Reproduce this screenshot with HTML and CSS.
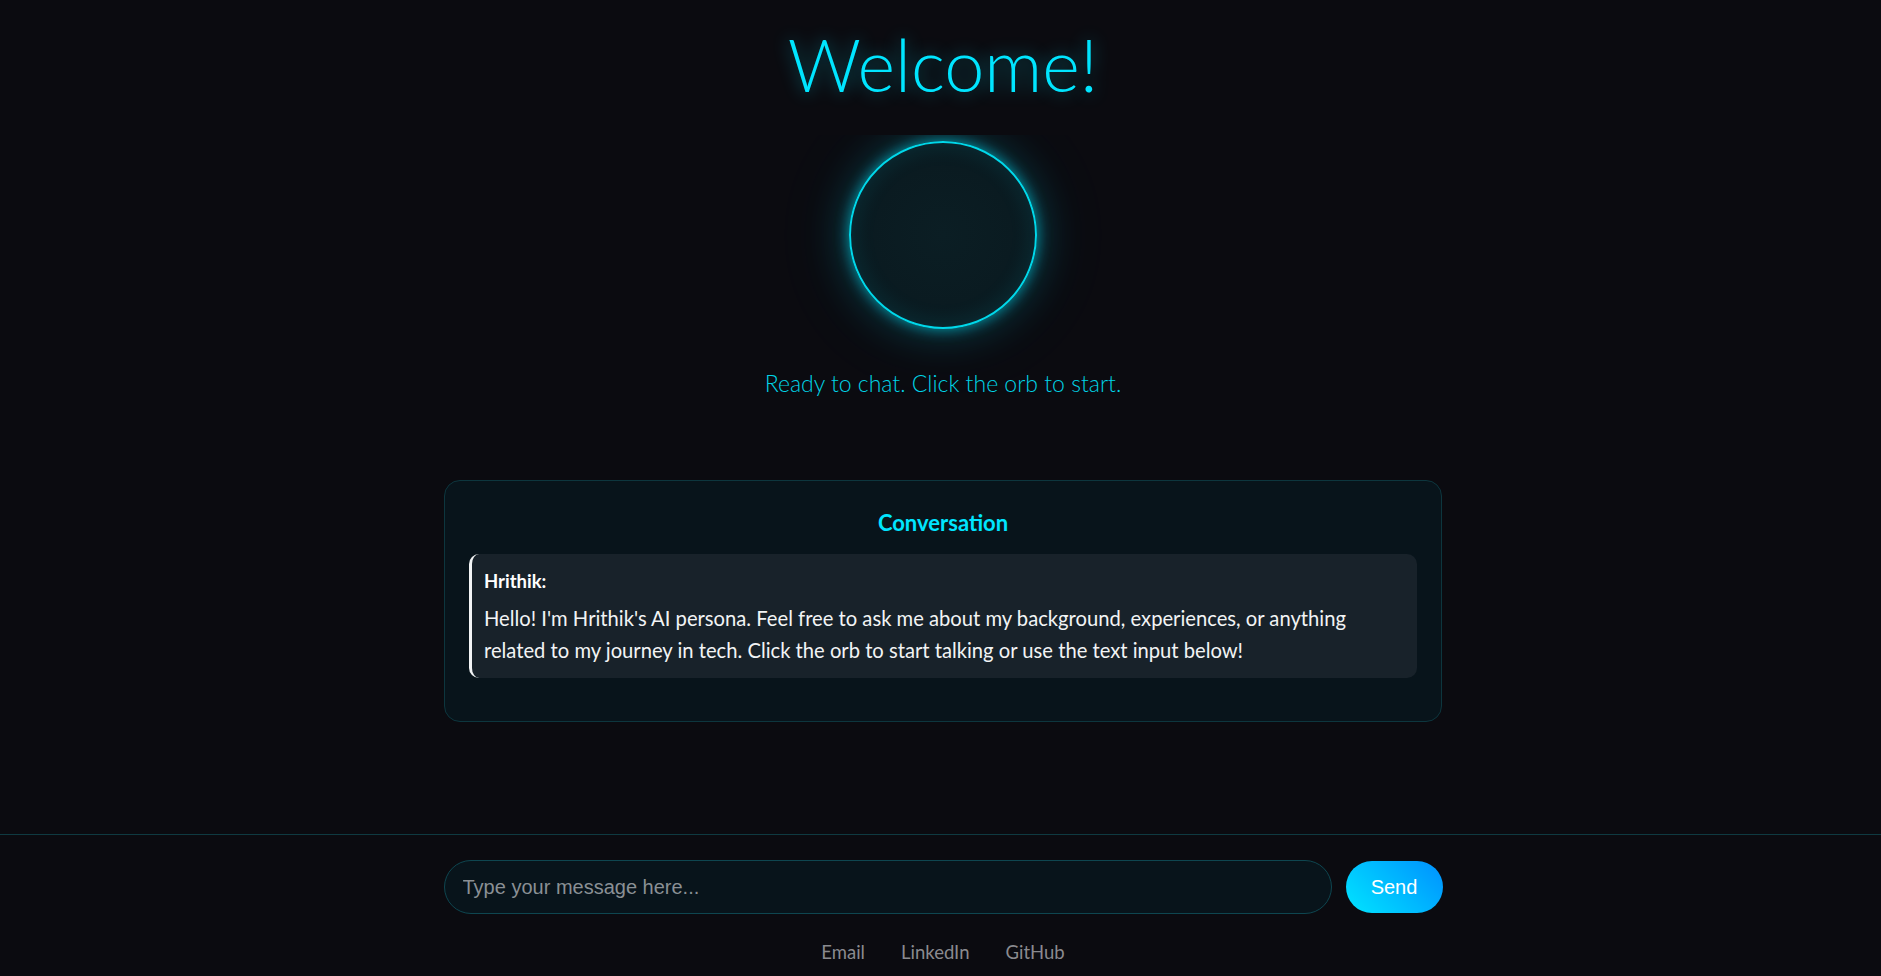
FILE: index.html
```html
<!DOCTYPE html>
<html lang="en">
<head>
<meta charset="utf-8">
<title>Hrithik AI Persona</title>
<link rel="stylesheet" href="styles.css">
</head>
<body>
<div class="page">
  <main class="main">
    <h1 class="title">Welcome!</h1>
    <div class="orb-wrap">
      <div class="orb"></div>
    </div>
    <p class="status">Ready to chat. Click the orb to start.</p>
    <section class="card">
      <h2 class="card-title">Conversation</h2>
      <div class="message">
        <strong class="speaker">Hrithik:</strong>
        <p class="message-text">Hello! I'm Hrithik's AI persona. Feel free to ask me about my background, experiences, or anything related to my journey in tech. Click the orb to start talking or use the text input below!</p>
      </div>
    </section>
  </main>
  <footer class="footer">
    <div class="input-row">
      <input class="text-input" type="text" placeholder="Type your message here...">
      <button class="send-btn" type="button">Send</button>
    </div>
    <nav class="links">
      <a class="link" href="#">Email</a>
      <a class="link" href="#">LinkedIn</a>
      <a class="link" href="#">GitHub</a>
    </nav>
  </footer>
</div>
</body>
</html>
```
FILE: styles.css
```css
* { box-sizing: border-box; }

html, body {
  margin: 0;
  padding: 0;
  background: #0b0b10;
}

body {
  font-family: "Lato", "Open Sans", sans-serif;
  color: #e8ecef;
}

.page {
  min-height: 100vh;
  display: flex;
  flex-direction: column;
}

.main {
  flex: 1;
  display: flex;
  flex-direction: column;
  align-items: center;
  padding-left: 5px;
}

.title {
  margin: 21px 0 0;
  font-size: 72px;
  line-height: 86px;
  font-weight: 300;
  color: #00e5ff;
  text-shadow: 0 0 18px rgba(0, 229, 255, 0.45);
}

.orb-wrap {
  margin-top: 28px;
  padding-top: 6px;
}

.orb {
  width: 188px;
  height: 188px;
  border-radius: 50%;
  border: 2px solid #00d8ea;
  background: radial-gradient(circle at 50% 50%, #0b1e24 0%, #0a1a20 70%, #0a1b21 100%);
  box-shadow:
    0 0 14px rgba(0, 229, 255, 0.6),
    0 0 45px rgba(0, 229, 255, 0.25),
    0 0 90px rgba(0, 229, 255, 0.08),
    inset 0 0 24px rgba(0, 229, 255, 0.12);
  clip-path: inset(-6px -160px -160px -160px);
}

.status {
  margin: 40px 0 0;
  font-size: 23px;
  line-height: 28px;
  font-weight: 300;
  color: #00d4e6;
}

.card {
  margin-top: 83px;
  width: 998px;
  padding: 29px 24px 43px;
  background: #08141b;
  border: 1px solid #0d363e;
  border-radius: 16px;
}

.card-title {
  margin: 0 0 18px;
  text-align: center;
  font-size: 22px;
  line-height: 26px;
  font-weight: 700;
  color: #00e5ff;
}

.message {
  background: #18222a;
  border-left: 3px solid #f2f4f5;
  border-radius: 10px;
  padding: 15px 20px 12px 12px;
}

.speaker {
  display: block;
  font-size: 18.5px;
  line-height: 24px;
  font-weight: 700;
  color: #ffffff;
}

.message-text {
  margin: 10px 0 0;
  font-size: 20.2px;
  line-height: 31.5px;
  color: #f2f4f5;
}

.footer {
  border-top: 1px solid #0f3a41;
  padding: 25px 0 12px 5px;
  display: flex;
  flex-direction: column;
  align-items: center;
}

.input-row {
  width: 999px;
  display: flex;
  gap: 14px;
  align-items: center;
}

.text-input {
  flex: 1;
  height: 54px;
  padding: 0 18px;
  border: 1px solid #0e4650;
  border-radius: 27px;
  background: #08141b;
  color: #e8ecef;
  font-family: "Liberation Sans", Arial, sans-serif;
  font-size: 20px;
  outline: none;
}

.text-input::placeholder {
  color: #8a9095;
}

.send-btn {
  width: 97px;
  height: 52px;
  border: none;
  border-radius: 26px;
  background: linear-gradient(45deg, #00e5ff 0%, #0090ff 100%);
  color: #ffffff;
  font-family: "Liberation Sans", Arial, sans-serif;
  font-size: 20px;
  cursor: pointer;
}

.links {
  margin-top: 26px;
  display: flex;
  justify-content: center;
}

.link {
  margin: 0 18px;
  font-size: 18.5px;
  line-height: 24px;
  color: #8a8a8f;
  text-decoration: none;
}
```
